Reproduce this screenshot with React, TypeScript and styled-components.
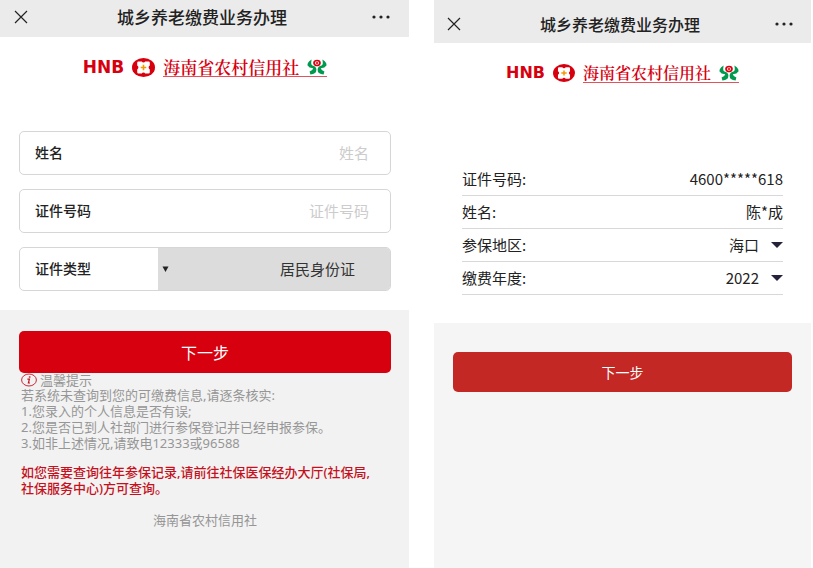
import React, { useId } from "react";
import styled, { createGlobalStyle, css } from "styled-components";

const GlobalStyle = createGlobalStyle`
  *, *::before, *::after { box-sizing: border-box; }
  body {
    margin: 0;
    background: #fff;
    color: #222;
    font-family: "Noto Sans CJK SC", sans-serif;
  }
  button, input, select { font: inherit; color: inherit; }
`;

const Screens = styled.main`
  display: grid;
  grid-template-columns: 409fr 377fr;
  gap: 25px;
  min-height: 100vh;
  padding-right: 2px;
`;

const Screen = styled.section`
  display: flex;
  flex-direction: column;
  min-width: 0;
`;

type Variant = "entry" | "confirm";

const TopBar = styled.header<{ $variant: Variant }>`
  display: grid;
  grid-template-columns: 1fr auto 1fr;
  align-items: center;
  background: #ebebeb;
  ${({ $variant }) =>
    $variant === "entry"
      ? css`
          height: 37px;
          padding: 0 19px 3px 14px;
          font-size: 17px;
        `
      : css`
          height: 43px;
          padding: 4px 18px 0 13px;
          font-size: 16px;
        `}
`;

const Title = styled.h1`
  margin: 0;
  font-size: inherit;
  font-weight: 500;
  line-height: 24px;
  white-space: nowrap;
`;

const IconButton = styled.button<{ $end?: boolean }>`
  display: flex;
  justify-self: ${({ $end }) => ($end ? "end" : "start")};
  padding: 0;
  border: 0;
  background: none;
`;

const Body = styled.div<{ $variant: Variant }>`
  background: #fff;
  padding: ${({ $variant }) =>
    $variant === "entry" ? "18px 18px 19px 19px" : "18px 28px 28px"};
`;

const Footer = styled.div<{ $variant: Variant }>`
  flex: 1;
  ${({ $variant }) =>
    $variant === "entry"
      ? css`
          padding: 21px 18px 0 19px;
          background: #f2f2f2;
        `
      : css`
          padding: 29px 19px 0;
          background: #f5f5f5;
        `}
`;

const LogoRow = styled.div<{ $size: number; $space: number }>`
  display: flex;
  justify-content: center;
  align-items: center;
  gap: 8px;
  height: 24px;
  margin-bottom: ${({ $space }) => $space}px;
  color: #d7000f;
  font-size: ${({ $size }) => $size}px;
  white-space: nowrap;
`;

const Initials = styled.span`
  font-family: "DejaVu Sans", sans-serif;
  font-weight: 700;
  line-height: 20px;
`;

const BankName = styled.span`
  display: flex;
  align-items: center;
  gap: 8px;
  height: 20px;
  border-bottom: 1px solid #e0545e;
  font-family: "Noto Serif CJK SC", "Noto Sans CJK SC", serif;
  font-weight: 600;
  line-height: 18px;
`;

const FieldList = styled.div`
  display: grid;
  gap: 14px;
`;

const Field = styled.div`
  display: flex;
  align-items: stretch;
  height: 44px;
  border: 1px solid #d6d6d6;
  border-radius: 5px;
  background: #fff;
  overflow: hidden;
`;

const FieldLabel = styled.label`
  display: flex;
  flex: 0 0 138px;
  align-items: center;
  padding: 0 0 2px 15px;
  font-size: 14px;
  font-weight: 500;
`;

const FieldInput = styled.input`
  flex: 1;
  min-width: 0;
  padding: 0 21px 2px 0;
  border: 0;
  outline: 0;
  background: none;
  font-size: 15px;
  text-align: right;
  &::placeholder { color: #ccc; opacity: 1; }
`;

const TypePicker = styled.div`
  display: flex;
  flex: 1;
  align-items: center;
  padding-left: 4px;
  background: #dcdcdc;
  color: #333;
`;

const PlainSelect = styled.select<{ $inset: number }>`
  flex: 1;
  min-width: 0;
  height: 32px;
  padding: 0 ${({ $inset }) => $inset}px 2px 0;
  border: 0;
  outline: 0;
  appearance: none;
  background: none;
  font-size: 15px;
  text-align: right;
  text-align-last: right;
`;

const NextButton = styled.button<{ $variant: Variant }>`
  display: block;
  width: 100%;
  border: 0;
  border-radius: 5px;
  color: #fff;
  ${({ $variant }) =>
    $variant === "entry"
      ? css`
          height: 42px;
          background: #d7000f;
          font-size: 16px;
        `
      : css`
          height: 40px;
          background: #c42824;
          font-size: 14px;
        `}
`;

const Notes = styled.div`
  padding-left: 2px;
  color: #969696;
  font-family: "Noto Sans", "Noto Sans CJK SC", sans-serif;
  font-size: 13px;
  line-height: 16px;
`;

const NotesTitle = styled.h2`
  display: flex;
  align-items: center;
  gap: 3px;
  margin: 0;
  font-size: 13px;
  font-weight: 400;
  line-height: 14px;
`;

const Note = styled.p<{ $warning?: boolean }>`
  margin: ${({ $warning }) => ($warning ? "13px 0 0" : "0")};
  color: ${({ $warning }) => ($warning ? "#c5111d" : "inherit")};
  font-weight: ${({ $warning }) => ($warning ? 500 : 400)};
`;

const Copyright = styled.p`
  margin: 16px 0 0;
  color: #969696;
  font-size: 13px;
  line-height: 16px;
  text-align: center;
`;

const DetailRow = styled.div`
  display: flex;
  align-items: center;
  justify-content: space-between;
  height: 33px;
  border-bottom: 1px solid #d8d8d8;
  font-size: 15px;
`;

const DetailLabel = styled.label`
  padding-bottom: 2px;
`;

const DetailValue = styled.output`
  padding-bottom: 2px;
`;

function CloseIcon() {
  return (
    <svg width="14" height="14" viewBox="0 0 14 14" aria-hidden="true">
      <path d="M1 1L13 13M13 1L1 13" stroke="#222" strokeWidth="1.2" />
    </svg>
  );
}

function MoreIcon() {
  return (
    <svg width="18" height="6" viewBox="0 0 18 6" aria-hidden="true" fill="#222">
      <circle cx="2" cy="3" r="1.6" />
      <circle cx="9" cy="3" r="1.6" />
      <circle cx="16" cy="3" r="1.6" />
    </svg>
  );
}

function Coin({ size }: { size: number }) {
  return (
    <svg width={size + 6} height={size + 2} viewBox="0 0 23 19" preserveAspectRatio="none" aria-hidden="true">
      <ellipse cx="11.5" cy="9.5" rx="11.5" ry="9.5" fill="#d7000f" />
      <path
        d="M6.5 3.5H9.8Q10.2 4.6 11.5 4.6Q12.8 4.6 13.2 3.5H16.5Q17.8 3.5 17.8 4.8V7.6Q16.6 8.2 16.6 9.5Q16.6 10.8 17.8 11.4V14.2Q17.8 15.5 16.5 15.5H13.2Q12.8 14.4 11.5 14.4Q10.2 14.4 9.8 15.5H6.5Q5.2 15.5 5.2 14.2V11.4Q6.4 10.8 6.4 9.5Q6.4 8.2 5.2 7.6V4.8Q5.2 3.5 6.5 3.5Z"
        fill="#fff"
      />
      <path d="M11.5 6.8V12.2M8.7 9.5H14.3" stroke="#f39800" strokeWidth="1.6" />
    </svg>
  );
}

function CoopEmblem() {
  return (
    <svg width="20" height="16" viewBox="0 0 20 16" aria-hidden="true">
      <path
        d="M4.6 0.6L2.2 2.2L0.8 4.2L0.4 6.2L2.6 8.4L6.2 9.2Q6 11.2 2.6 12.4L3.4 15.4Q9.6 15.2 9.4 10.6Q9.2 7.4 5.4 6.6Q3.8 5.8 4.2 3.6Z"
        fill="#009a4e"
      />
      <path
        d="M15.4 0.6L17.8 2.2L19.2 4.2L19.6 6.2L17.4 8.4L13.8 9.2Q14 11.2 17.4 12.4L16.6 15.4Q10.4 15.2 10.6 10.6Q10.8 7.4 14.6 6.6Q16.2 5.8 15.8 3.6Z"
        fill="#009a4e"
      />
      <ellipse cx="10" cy="4" rx="3" ry="2.5" fill="#fff" stroke="#d7000f" strokeWidth="1.7" />
      <path d="M11.2 3.4H9.2V4.6H11.2" fill="none" stroke="#d7000f" strokeWidth="0.9" />
    </svg>
  );
}

function InfoIcon() {
  return (
    <svg width="16" height="14" viewBox="0 0 16 14" aria-hidden="true">
      <ellipse cx="8" cy="7" rx="7.4" ry="6" fill="none" stroke="#c5111d" strokeWidth="0.9" />
      <ellipse cx="8.7" cy="4" rx="1" ry="0.8" fill="#c5111d" />
      <path d="M6.4 6.2H8.4L7.4 10H9" fill="none" stroke="#c5111d" strokeWidth="1.2" />
    </svg>
  );
}

function SmallArrow() {
  return (
    <svg width="7" height="6" viewBox="0 0 7 6" aria-hidden="true">
      <path d="M0.5 0.5H6.5L3.5 6Z" fill="#222" />
    </svg>
  );
}

function WideArrow() {
  return (
    <svg width="12" height="6" viewBox="0 0 12 6" aria-hidden="true">
      <path d="M0 0H12L6 6Z" fill="#25223a" />
    </svg>
  );
}

function ScreenBar({ variant }: { variant: Variant }) {
  return (
    <TopBar $variant={variant}>
      <IconButton type="button" aria-label="关闭">
        <CloseIcon />
      </IconButton>
      <Title>城乡养老缴费业务办理</Title>
      <IconButton type="button" aria-label="更多" $end>
        <MoreIcon />
      </IconButton>
    </TopBar>
  );
}

function BankLogo({ size, space }: { size: number; space: number }) {
  return (
    <LogoRow $size={size} $space={space}>
      <Initials>HNB</Initials>
      <Coin size={size} />
      <BankName>
        海南省农村信用社
        <CoopEmblem />
      </BankName>
    </LogoRow>
  );
}

function TextField({ label }: { label: string }) {
  const id = useId();
  return (
    <Field>
      <FieldLabel htmlFor={id}>{label}</FieldLabel>
      <FieldInput id={id} placeholder={label} />
    </Field>
  );
}

function DetailText({ label, value }: { label: string; value: string }) {
  const id = useId();
  return (
    <DetailRow>
      <DetailLabel htmlFor={id}>{label}:</DetailLabel>
      <DetailValue id={id}>{value}</DetailValue>
    </DetailRow>
  );
}

function DetailSelect({ label, value }: { label: string; value: string }) {
  const id = useId();
  return (
    <DetailRow>
      <DetailLabel htmlFor={id}>{label}:</DetailLabel>
      <PlainSelect id={id} $inset={12} defaultValue={value}>
        <option>{value}</option>
      </PlainSelect>
      <WideArrow />
    </DetailRow>
  );
}

function EntryScreen() {
  const typeId = useId();
  return (
    <Screen>
      <ScreenBar variant="entry" />
      <Body $variant="entry">
        <BankLogo size={17} space={52} />
        <FieldList>
          <TextField label="姓名" />
          <TextField label="证件号码" />
          <Field>
            <FieldLabel htmlFor={typeId}>证件类型</FieldLabel>
            <TypePicker>
              <SmallArrow />
              <PlainSelect id={typeId} $inset={35} defaultValue="居民身份证">
                <option>居民身份证</option>
              </PlainSelect>
            </TypePicker>
          </Field>
        </FieldList>
      </Body>
      <Footer $variant="entry">
        <NextButton type="button" $variant="entry">下一步</NextButton>
        <Notes>
          <NotesTitle>
            <InfoIcon />
            温馨提示
          </NotesTitle>
          <Note>若系统未查询到您的可缴费信息,请逐条核实:</Note>
          <Note>1.您录入的个人信息是否有误;</Note>
          <Note>2.您是否已到人社部门进行参保登记并已经申报参保。</Note>
          <Note>3.如非上述情况,请致电12333或96588</Note>
          <Note $warning>
            如您需要查询往年参保记录,请前往社保医保经办大厅(社保局,
            <br />
            社保服务中心)方可查询。
          </Note>
        </Notes>
        <Copyright>海南省农村信用社</Copyright>
      </Footer>
    </Screen>
  );
}

function ConfirmScreen() {
  return (
    <Screen>
      <ScreenBar variant="confirm" />
      <Body $variant="confirm">
        <BankLogo size={16} space={78} />
        <DetailText label="证件号码" value="4600*****618" />
        <DetailText label="姓名" value="陈*成" />
        <DetailSelect label="参保地区" value="海口" />
        <DetailSelect label="缴费年度" value="2022" />
      </Body>
      <Footer $variant="confirm">
        <NextButton type="button" $variant="confirm">下一步</NextButton>
      </Footer>
    </Screen>
  );
}

export default function App() {
  return (
    <>
      <GlobalStyle />
      <Screens>
        <EntryScreen />
        <ConfirmScreen />
      </Screens>
    </>
  );
}
